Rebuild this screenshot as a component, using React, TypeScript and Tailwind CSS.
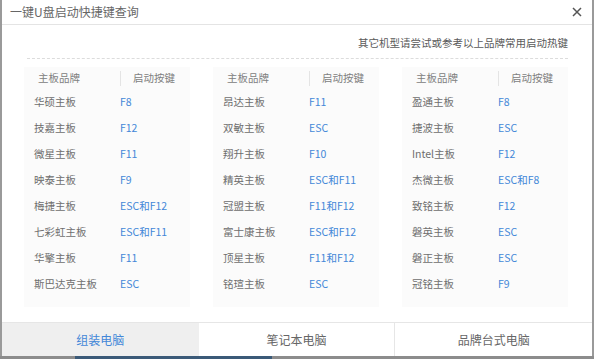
import React from "react";

const data: [string, string][][] = [
  [
    ["华硕主板", "F8"],
    ["技嘉主板", "F12"],
    ["微星主板", "F11"],
    ["映泰主板", "F9"],
    ["梅捷主板", "ESC和F12"],
    ["七彩虹主板", "ESC和F11"],
    ["华擎主板", "F11"],
    ["斯巴达克主板", "ESC"],
  ],
  [
    ["昂达主板", "F11"],
    ["双敏主板", "ESC"],
    ["翔升主板", "F10"],
    ["精英主板", "ESC和F11"],
    ["冠盟主板", "F11和F12"],
    ["富士康主板", "ESC和F12"],
    ["顶星主板", "F11和F12"],
    ["铭瑄主板", "ESC"],
  ],
  [
    ["盈通主板", "F8"],
    ["捷波主板", "ESC"],
    ["Intel主板", "F12"],
    ["杰微主板", "ESC和F8"],
    ["致铭主板", "F12"],
    ["磐英主板", "ESC"],
    ["磐正主板", "ESC"],
    ["冠铭主板", "F9"],
  ],
];

function Panel({ rows }: { rows: [string, string][] }) {
  return (
    <div className="bg-[#fbfbfb] h-[240px]">
      <div className="grid grid-cols-[96px_1fr] h-[22px] items-center text-[#808080]">
        <div className="pl-[14px]">主板品牌</div>
        <div className="border-l border-[#e4e4e4] pl-[12px] h-[15px] flex items-center">启动按键</div>
      </div>
      {rows.map(([b, k]) => (
        <div key={b} className="grid grid-cols-[96px_1fr] h-[26px] items-center">
          <div className="pl-[10px] text-[#6e6e6e]">{b}</div>
          <div className="text-[#4387d8]">{k}</div>
        </div>
      ))}
    </div>
  );
}

export default function App() {
  return (
    <div
      className="w-[594px] h-[359px] bg-white flex flex-col overflow-hidden"
      style={{ fontFamily: '"Noto Sans CJK SC", "Noto Sans", sans-serif' }}
    >
      <div className="flex-1 flex flex-col border-l-2 border-r-2 border-[#9a9a9a]">
        <div className="h-[25px] border-b border-[#e4e4e4] flex items-center justify-between pl-[8px] pr-[9px]">
          <span className="text-[12px] text-[#666]">一键U盘启动快捷键查询</span>
          <svg width="10" height="10" viewBox="0 0 10 10" className="mr-[1px]">
            <path d="M1 1 L9 9 M9 1 L1 9" stroke="#555" strokeWidth="1.5" />
          </svg>
        </div>
        <div className="ml-[25px] mr-[24px] pt-[11px] text-[10.5px]">
          <div className="text-right text-[#5a5a5a] leading-[14px]">其它机型请尝试或参考以上品牌常用启动热键</div>
          <div className="mt-[8px] border-t border-dashed border-[#dcdcdc]" />
        </div>
        <div className="ml-[22px] mr-[24px] mt-[8px] grid grid-cols-3 gap-[23px] text-[10.5px]">
          {data.map((rows, i) => (
            <Panel key={i} rows={rows} />
          ))}
        </div>
        <div className="mt-[15px] h-[34px] border-t border-[#e6e6e6] grid grid-cols-3 text-[12px]">
          <div className="bg-[#efefef] flex items-center justify-center text-[#4387d8]">组装电脑</div>
          <div className="flex items-center justify-center text-[#666] border-r border-[#e6e6e6]">笔记本电脑</div>
          <div className="flex items-center justify-center text-[#666]">品牌台式电脑</div>
        </div>
      </div>
      <div className="h-[3px] flex">
        <div className="w-[75px] bg-[#8c8c8c]" />
        <div className="w-[197px] bg-[#3b5a78]" />
        <div className="flex-1 bg-[#8c8c8c]" />
      </div>
    </div>
  );
}
